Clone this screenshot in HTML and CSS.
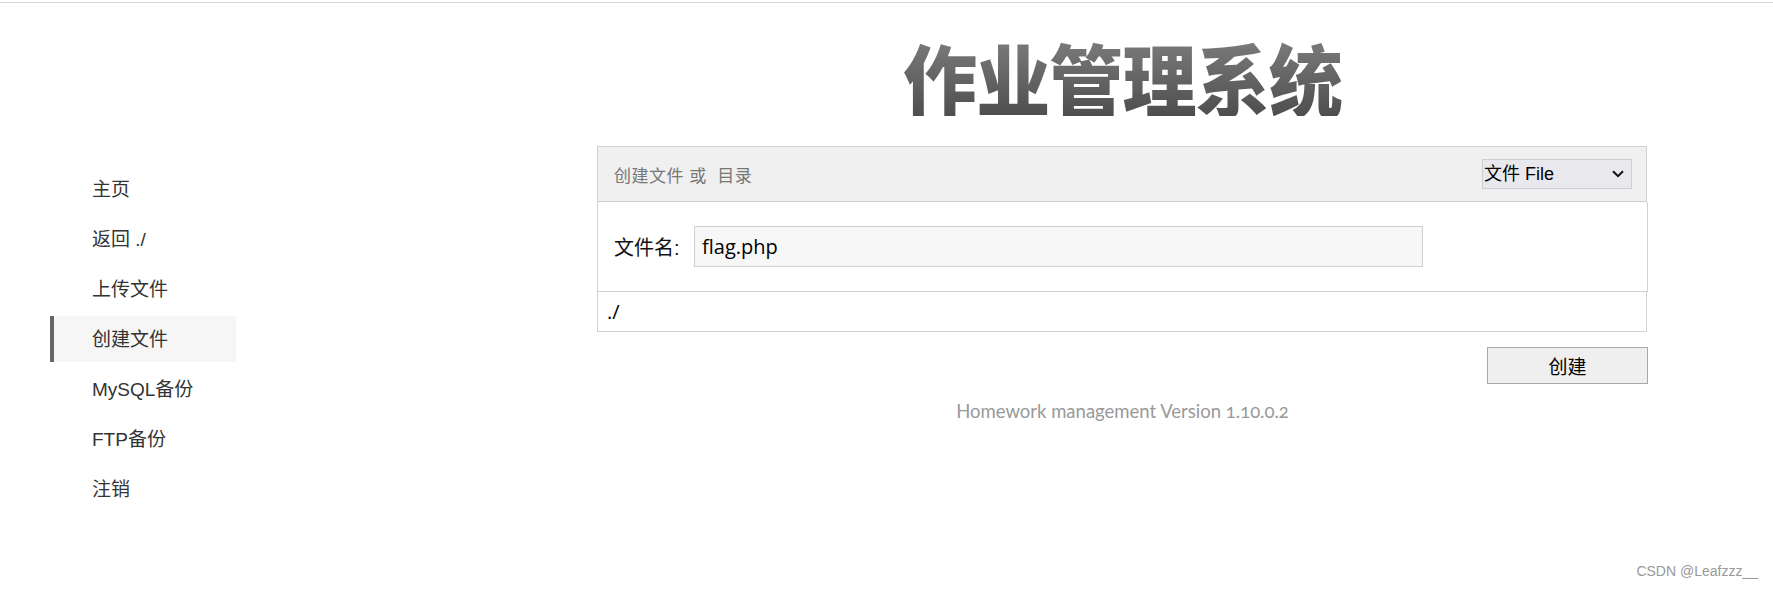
FILE: index.html
```html
<!DOCTYPE html>
<html lang="zh-CN">
<head>
  <meta charset="UTF-8">
  <meta name="viewport" content="width=device-width, initial-scale=1.0">
  <title>作业管理系统</title>
  <link rel="stylesheet" href="styles.css">
</head>
<body>
  <div class="topline"></div>

  <div class="page">
    <!-- 左侧菜单 -->
    <aside class="sidebar">
      <ul class="nav">
        <li><a href="#">主页</a></li>
        <li><a href="#">返回 ./</a></li>
        <li><a href="#">上传文件</a></li>
        <li class="active"><a href="#">创建文件</a></li>
        <li><a href="#">MySQL备份</a></li>
        <li><a href="#">FTP备份</a></li>
        <li><a href="#">注销</a></li>
      </ul>
    </aside>

    <!-- 主内容 -->
    <main class="content">
      <h1 class="title">作业管理系统</h1>

      <div class="panel">
        <div class="panel-head">
          <span class="panel-title">创建文件 或&nbsp; 目录</span>
          <div class="select-wrap">
            <select id="type">
              <option value="file">文件 File</option>
              <option value="dir">目录 Dir</option>
            </select>
            <svg class="chevron" width="12" height="8" viewBox="0 0 12 8"><path d="M1 1.2 L6 6.2 L11 1.2" fill="none" stroke="#111" stroke-width="2"/></svg>
          </div>
        </div>
        <div class="panel-body">
          <label for="filename">文件名:</label>
          <input type="text" id="filename" value="flag.php">
        </div>
        <div class="panel-path">./</div>
      </div>

      <div class="actions">
        <button>创建</button>
      </div>

      <p class="footer">Homework management Version 1.10.0.2</p>
    </main>
  </div>

  <div class="watermark">CSDN @Leafzzz__</div>
</body>
</html>
```

FILE: styles.css
```css
body {
  margin: 0;
  font-family: "Liberation Sans", "Noto Sans CJK SC", sans-serif;
  color: #333;
  background: #fff;
}
.topline {
  height: 2px;
  border-bottom: 1px solid #d4d4d4;
}
.page {
  display: flex;
  align-items: flex-start;
  padding-left: 50px;
}
.sidebar {
  width: 547px;
  padding-top: 163px;
}
.nav {
  list-style: none;
  margin: 0;
  padding: 0;
}
.nav li {
  width: 182px;
  height: 46px;
  margin-bottom: 4px;
  border-left: 4px solid transparent;
}
.nav li a {
  display: block;
  padding: 3px 0 0 38px;
  line-height: 42px;
  font-size: 19px;
  color: #333;
  text-decoration: none;
}
.nav li.active {
  background: #f6f6f6;
  border-left-color: #666;
}
.content {
  width: 1051px;
}
.title {
  margin: 35px 0 30px;
  text-align: center;
  font-family: "Noto Sans CJK SC", sans-serif;
  font-weight: 900;
  font-size: 78px;
  line-height: 1;
  letter-spacing: -1px;
  background: linear-gradient(#7c7c7c, #4e4e4e);
  -webkit-background-clip: text;
  background-clip: text;
  color: transparent;
  transform: scaleX(0.95);
}
.panel-head {
  display: flex;
  align-items: center;
  justify-content: space-between;
  height: 54px;
  margin-right: 1px;
  padding: 0 14px 0 16px;
  background: #f0f0f0;
  border: 1px solid #d0d0d0;
}
.panel-title {
  font-size: 17px;
  letter-spacing: 0.5px;
  color: #777;
}
.select-wrap {
  position: relative;
}
.select-wrap select {
  appearance: none;
  -webkit-appearance: none;
  width: 150px;
  height: 30px;
  padding: 0 0 0 1px;
  font-family: "Liberation Sans", "Noto Sans CJK SC", sans-serif;
  font-size: 18px;
  color: #000;
  background: #e9e9ed;
  border: 1px solid #cfcfcf;
  border-radius: 0;
}
.chevron {
  position: absolute;
  right: 8px;
  top: 11px;
  pointer-events: none;
}
.panel-body {
  display: flex;
  align-items: center;
  height: 89px;
  padding-left: 16px;
  border: 1px solid #d0d0d0;
  border-top: none;
}
.panel-body label {
  width: 80px;
  font-size: 20px;
  color: #111;
}
.panel-body input {
  box-sizing: border-box;
  width: 729px;
  height: 41px;
  padding: 0 7px;
  font-family: "Open Sans", "Noto Sans CJK SC", sans-serif;
  font-size: 20px;
  color: #000;
  background: #f7f7f7;
  border: 1px solid #cfcfcf;
}
.panel-path {
  height: 39px;
  line-height: 39px;
  margin-right: 1px;
  padding-left: 9px;
  font-family: "Open Sans", sans-serif;
  font-size: 20px;
  color: #000;
  border: 1px solid #d0d0d0;
  border-top: none;
}
.actions {
  display: flex;
  justify-content: flex-end;
  margin-top: 15px;
}
.actions button {
  width: 161px;
  height: 37px;
  font-family: "Liberation Sans", "Noto Sans CJK SC", sans-serif;
  font-size: 19px;
  color: #000;
  background: #efefef;
  border: 1px solid #a8a8a8;
}
.footer {
  margin: 16px 0 0;
  text-align: center;
  font-family: Lato, "Open Sans", sans-serif;
  font-size: 18.5px;
  font-variant-numeric: oldstyle-nums;
  color: #999;
}
.watermark {
  position: absolute;
  right: 15px;
  top: 563px;
  font-family: "Liberation Sans", sans-serif;
  font-size: 14px;
  color: #999;
}
```
